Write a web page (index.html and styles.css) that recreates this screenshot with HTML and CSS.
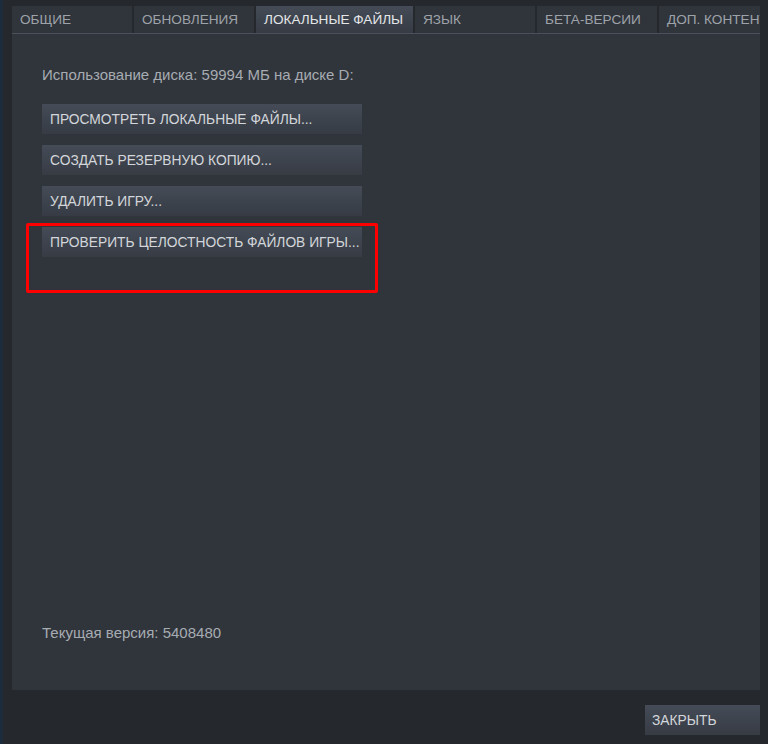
FILE: index.html
```html
<!DOCTYPE html>
<html>
  <head>
    <meta name="viewport" content="width=device-width, initial-scale=1" />
    <title>Свойства: локальные файлы</title>
    <link rel="stylesheet" href="styles.css">
  </head>

  <body>
    <div id="window">
      <div id="tabs">
        <div class="tab">ОБЩИЕ</div>
        <div class="tab">ОБНОВЛЕНИЯ</div>
        <div class="tab active">ЛОКАЛЬНЫЕ ФАЙЛЫ</div>
        <div class="tab">ЯЗЫК</div>
        <div class="tab">БЕТА-ВЕРСИИ</div>
        <div class="tab last">ДОП. КОНТЕНТ</div>
      </div>
      <div id="panel">
        <p class="info">Использование диска: 59994 МБ на диске D:</p>
        <button class="btn">ПРОСМОТРЕТЬ ЛОКАЛЬНЫЕ ФАЙЛЫ...</button>
        <button class="btn">СОЗДАТЬ РЕЗЕРВНУЮ КОПИЮ...</button>
        <button class="btn">УДАЛИТЬ ИГРУ...</button>
        <div class="marked">
          <button class="btn">ПРОВЕРИТЬ ЦЕЛОСТНОСТЬ ФАЙЛОВ ИГРЫ...</button>
        </div>
        <p class="info version">Текущая версия: 5408480</p>
      </div>
      <div id="footer">
        <button class="btn close">ЗАКРЫТЬ</button>
      </div>
    </div>
  </body>
</html>
```

FILE: styles.css
```css
* {
  box-sizing: border-box;
}

html,
body {
  margin: 0;
  height: 100%;
}

body {
  background-color: #25282d;
  font-family: "Liberation Sans", Arial, sans-serif;
  border-left: 3px solid #1d2c3c;
  overflow: hidden;
}

#window {
  padding: 6px 8px 0 9px;
}

#tabs {
  display: flex;
  gap: 2px;
  height: 28px;
  border-bottom: 1px solid #4a505c;
  white-space: nowrap;
  overflow: hidden;
}

.tab {
  flex: 0 0 120px;
  height: 27px;
  line-height: 27px;
  padding-left: 8px;
  background-color: #30343b;
  color: #9ea3a9;
  font-size: 13.6px;
}

.tab.active {
  flex-basis: 157px;
  height: 28px;
  margin-bottom: -1px;
  background: linear-gradient(#454c57, #353a43);
  color: #e4e6e8;
}

.tab.last {
  flex: 1 0 120px;
}

#panel {
  height: 656px;
  background-color: #30343b;
  padding: 32px 30px 0 30px;
  position: relative;
}

.info {
  margin: 0 0 21px 0;
  color: #a7acb2;
  font-size: 15px;
  line-height: 17px;
}

.btn {
  display: block;
  width: 320px;
  height: 30px;
  margin: 0 0 11px 0;
  padding: 0 0 0 8px;
  border: none;
  background: linear-gradient(#454c57, #363b44);
  color: #d3d6da;
  font-family: "Liberation Sans", Arial, sans-serif;
  font-size: 13.8px;
  text-align: left;
  cursor: pointer;
}

.btn:hover {
  background: linear-gradient(#4f5763, #3d434d);
}

/* Red highlight frame drawn over the verify button */
.marked {
  position: relative;
  width: 320px;
  margin-top: 6px;
}

.marked::after {
  content: "";
  position: absolute;
  top: -4px;
  left: -16px;
  width: 346px;
  height: 64px;
  border: 3px solid #ff0000;
  border-radius: 2px;
}

.version {
  position: absolute;
  left: 30px;
  top: 590px;
  margin: 0;
}

#footer {
  display: flex;
  justify-content: flex-end;
  padding-top: 15px;
}

.btn.close {
  width: 115px;
  padding-left: 7px;
  margin: 0;
}
```
